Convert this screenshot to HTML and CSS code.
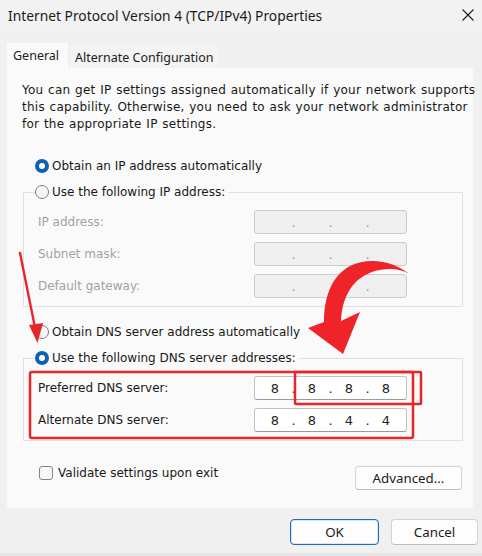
FILE: index.html
```html
<!DOCTYPE html>
<html lang="en">
<head>
<meta charset="utf-8">
<title>Internet Protocol Version 4 (TCP/IPv4) Properties</title>
<link rel="stylesheet" href="styles.css">
</head>
<body>
<div class="dialog">
  <div class="titlebar">
    <span class="title">Internet Protocol Version 4 (TCP/IPv4) Properties</span>
    <svg class="close" viewBox="0 0 12 12" width="12" height="12"><path d="M0.5 0.5L11.5 11.5M11.5 0.5L0.5 11.5" stroke="#1a1a1a" stroke-width="1.1" fill="none"/></svg>
  </div>
  <div class="tabs">
    <div class="tab active">General</div>
    <div class="tab">Alternate Configuration</div>
  </div>
  <div class="panel">
    <p class="desc">You can get IP settings assigned automatically if your network supports<br>this capability. Otherwise, you need to ask your network administrator<br>for the appropriate IP settings.</p>

    <div class="option first"><span class="radio on"></span><span>Obtain an IP address automatically</span></div>

    <fieldset class="group">
      <legend><span class="option"><span class="radio"></span><span>Use the following IP address:</span></span></legend>
      <div class="row disabled"><span class="lbl">IP address:</span>
        <div class="ipbox off"><span class="seg"></span><span class="dot">.</span><span class="seg"></span><span class="dot">.</span><span class="seg"></span><span class="dot">.</span><span class="seg"></span></div></div>
      <div class="row disabled"><span class="lbl">Subnet mask:</span>
        <div class="ipbox off"><span class="seg"></span><span class="dot">.</span><span class="seg"></span><span class="dot">.</span><span class="seg"></span><span class="dot">.</span><span class="seg"></span></div></div>
      <div class="row disabled"><span class="lbl">Default gateway:</span>
        <div class="ipbox off"><span class="seg"></span><span class="dot">.</span><span class="seg"></span><span class="dot">.</span><span class="seg"></span><span class="dot">.</span><span class="seg"></span></div></div>
    </fieldset>

    <div class="option third"><span class="radio"></span><span>Obtain DNS server address automatically</span></div>

    <fieldset class="group second">
      <legend><span class="option"><span class="radio on"></span><span>Use the following DNS server addresses:</span></span></legend>
      <div class="row"><span class="lbl">Preferred DNS server:</span>
        <div class="ipbox"><span class="seg">8</span><span class="dot">.</span><span class="seg">8</span><span class="dot">.</span><span class="seg">8</span><span class="dot">.</span><span class="seg">8</span></div></div>
      <div class="row"><span class="lbl">Alternate DNS server:</span>
        <div class="ipbox"><span class="seg">8</span><span class="dot">.</span><span class="seg">8</span><span class="dot">.</span><span class="seg">4</span><span class="dot">.</span><span class="seg">4</span></div></div>
    </fieldset>

    <div class="bottomrow">
      <div class="check"><span class="box"></span><span>Validate settings upon exit</span></div>
      <button class="btn adv">Advanced...</button>
    </div>
  </div>
  <div class="footer">
    <button class="btn ok">OK</button>
    <button class="btn cancel">Cancel</button>
  </div>

  <svg class="annot" viewBox="0 0 482 556" width="482" height="556">
    <g fill="none" stroke="#e6262b" stroke-linejoin="round">
      <rect x="30" y="372" width="383" height="66" rx="2" stroke-width="2.5"/>
      <rect x="295" y="372" width="126" height="32" rx="1" stroke-width="2.5"/>
      <path d="M20 253 L35.5 330" stroke-width="2.4" stroke-linecap="round"/>
    </g>
    <path d="M29 325 L43 323 L37.5 343 Z" fill="#e6262b"/>
    <path d="M409 274 C395 262 370 256 350 266 C333 275 324 295 324 322 L308 328 L343 354 L360 312 L341 321 C342 300 350 280 372 272 C388 267 400 269 409 274 Z" fill="#ee2428"/>
  </svg>
</div>
</body>
</html>
```
FILE: styles.css
```css
* { box-sizing: border-box; }
html, body { margin: 0; padding: 0; }
body {
  width: 482px;
  height: 556px;
  overflow: hidden;
  background: #f0f0f0;
  font-family: "DejaVu Sans", Verdana, sans-serif;
  font-size: 12px;
  color: #181818;
}
.dialog {
  position: relative;
  width: 482px;
  height: 556px;
  background: #f0f0f0;
  border-bottom: 3px solid #e5e5e5;
}
.titlebar {
  height: 30px;
  display: flex;
  align-items: center;
  justify-content: space-between;
  padding: 0 8px 0 8px;
  background: #f2f2f2;
}
.title {
  font-family: "Noto Sans", sans-serif;
  font-size: 13.8px;
  color: #1a1a1a;
}
.close { display: block; }
.tabs {
  display: flex;
  align-items: flex-end;
  gap: 2px;
  height: 25px;
  margin: 13px 0 0 7px;
}
.tab {
  font-family: "Noto Sans", sans-serif;
  font-size: 12.5px;
  height: 22px;
  padding: 0 4px 0 5px;
  display: flex;
  align-items: center;
  background: #f3f3f3;
  color: #222;
}
.tab.active {
  height: 25px;
  width: 61px;
  padding: 0 0 0 6px;
  background: #fafafa;
}
.panel {
  width: 466px;
  height: 440px;
  margin-left: 7px;
  background: #fafafa;
  padding: 14px 10px 0 15px;
  display: flex;
  flex-direction: column;
}
.desc {
  margin: 0;
  line-height: 17px;
  white-space: nowrap;
  letter-spacing: 0.25px;
  word-spacing: 0.6px;
}
.option {
  display: flex;
  align-items: center;
  gap: 3px;
  height: 20px;
  white-space: nowrap;
}
.first { margin: 23px 0 0 13px; }
.third { margin: 15px 0 0 13px; }
.radio {
  display: block;
  width: 14px;
  height: 14px;
  border-radius: 50%;
  border: 1px solid #7b7b7b;
  background: #f6f6f6;
  flex: none;
}
.radio.on {
  border: 4px solid #0f5fb5;
  background: #ffffff;
}
.group {
  margin: 6px 0 0 1px;
  padding: 8px 12px 8px 11px;
  border: 1px solid #e0e0e0;
  min-width: 0;
}
.group legend {
  padding: 0 3px 0 0;
  margin: 0;
}
.row {
  display: flex;
  align-items: center;
  height: 24px;
}
.row + .row { margin-top: 8px; }
.lbl {
  width: 216px;
  margin-left: 3px;
  flex: none;
  white-space: nowrap;
}
.disabled .lbl { color: #a2a2a2; }
.ipbox {
  width: 153px;
  height: 24px;
  display: flex;
  align-items: center;
  padding-left: 5px;
  border: 1px solid #c2c2c2;
  border-bottom-color: #9a9a9a;
  border-radius: 3px;
  background: #ffffff;
  font-size: 13px;
  color: #222;
}
.ipbox.off {
  background: #efefef;
  border-color: #cbcbcb;
  color: #9a9a9a;
}
.seg {
  width: 30px;
  text-align: center;
}
.dot {
  width: 7px;
  text-align: center;
}
.bottomrow {
  display: flex;
  justify-content: space-between;
  align-items: flex-start;
  margin-top: 25px;
}
.check {
  display: flex;
  align-items: center;
  gap: 5px;
  height: 14px;
  margin-left: 17px;
  white-space: nowrap;
}
.box {
  display: block;
  width: 14px;
  height: 14px;
  border: 1px solid #858585;
  border-radius: 3px;
  background: #f7f7f7;
}
.btn {
  font-family: "Noto Sans", sans-serif;
  font-size: 13.3px;
  color: #1a1a1a;
  background: #fdfdfd;
  border: 1px solid #d3d3d3;
  border-bottom-color: #bdbdbd;
  border-radius: 4px;
  padding: 0;
}
.adv {
  width: 107px;
  height: 24px;
  margin-right: 1px;
}
.footer {
  display: flex;
  justify-content: flex-end;
  gap: 12px;
  padding: 11px 4px 0 0;
}
.ok, .cancel { height: 26px; }
.ok {
  width: 89px;
  border: 1px solid #1a6bc2;
  box-shadow: inset 0 0 0 1px #d8e6f5;
}
.cancel { width: 87px; }
.annot {
  position: absolute;
  left: 0;
  top: 0;
  pointer-events: none;
}
```
